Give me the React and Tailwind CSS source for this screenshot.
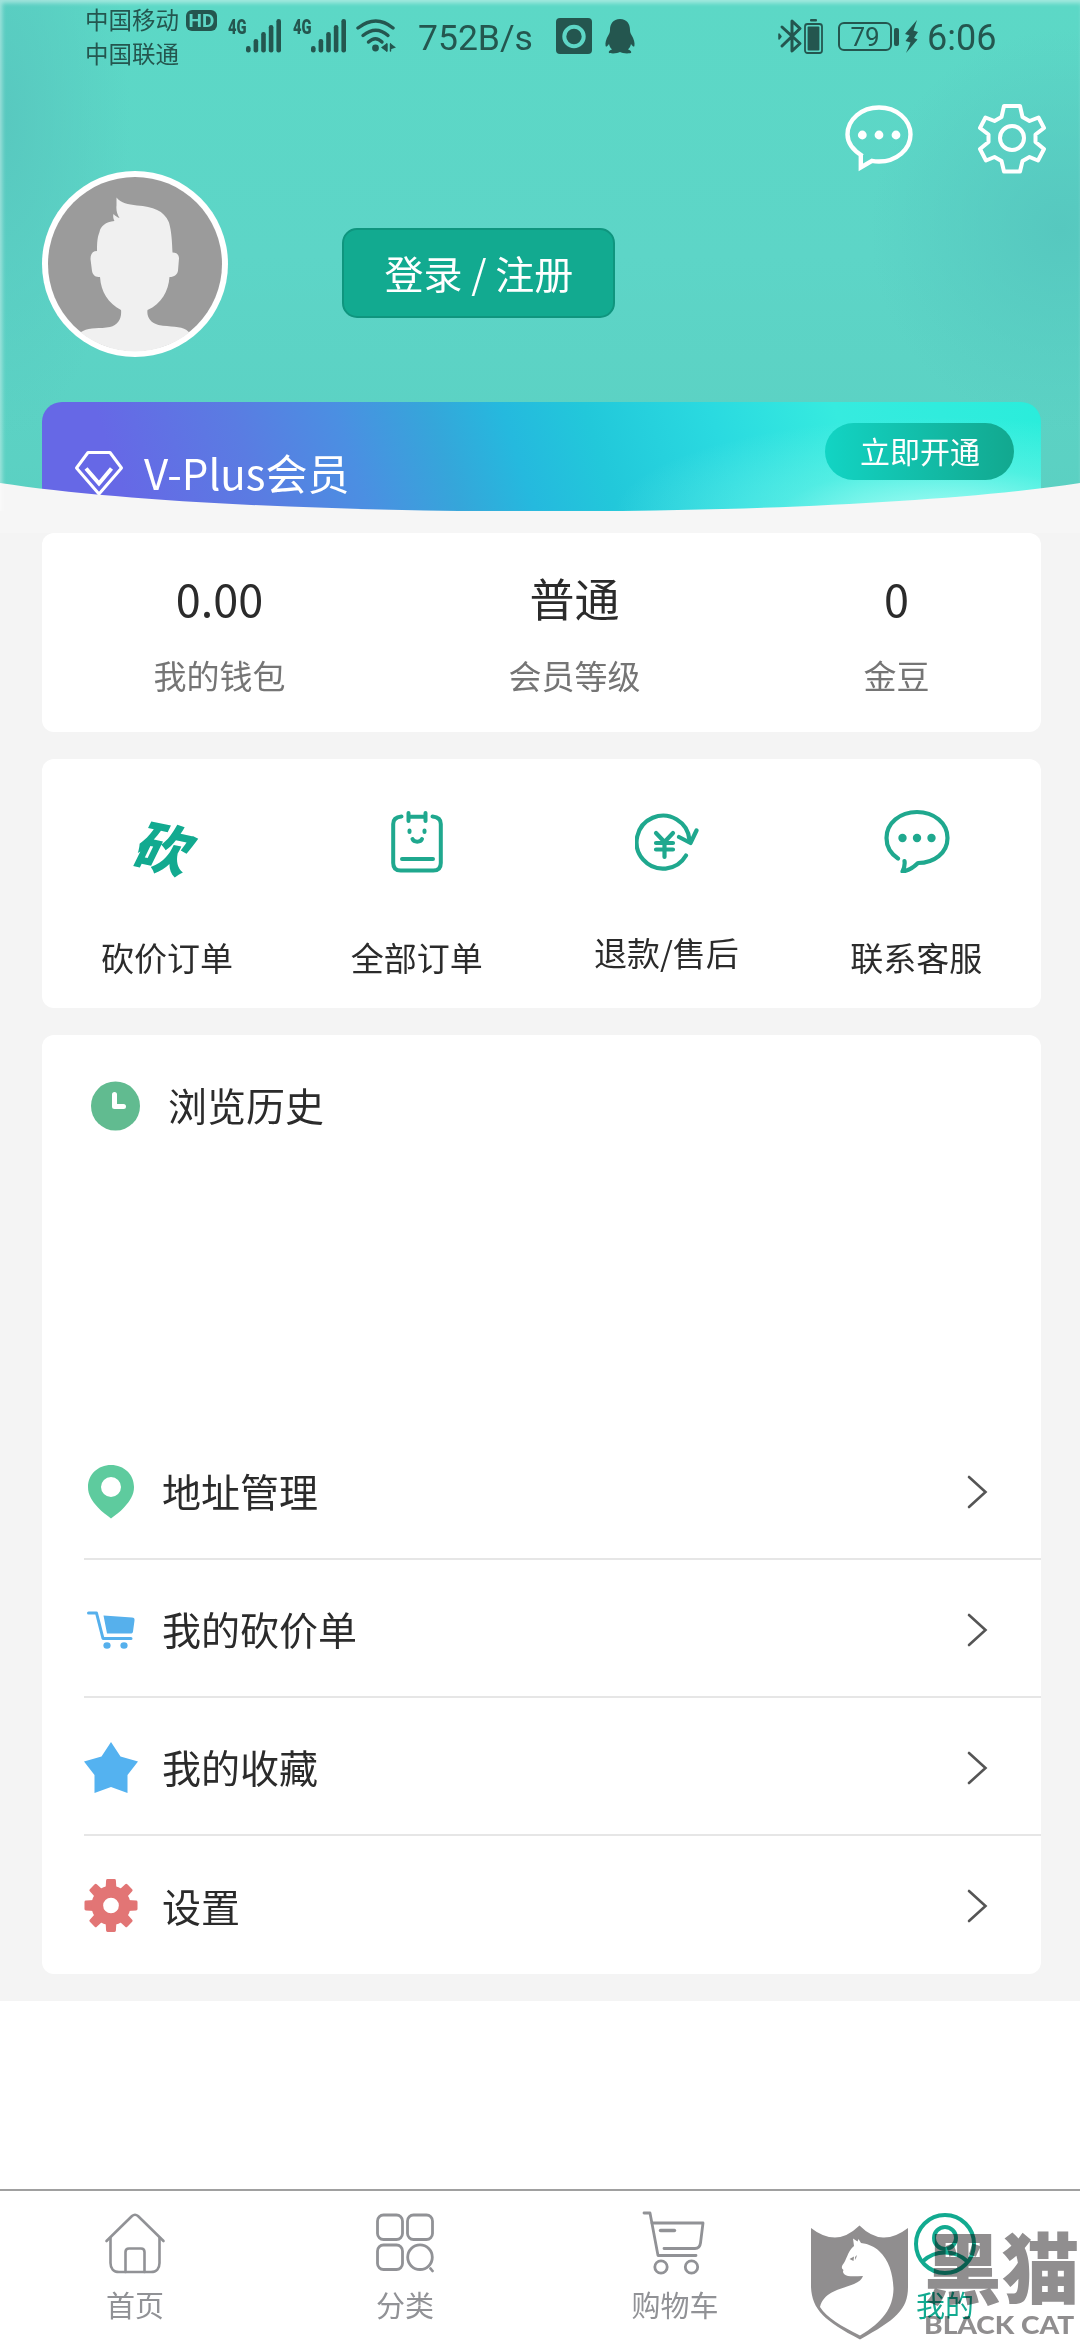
import React from "react";

const INK = "#24564f";

function Signal() {
  return (
    <svg className="block h-[34px] w-[36px]" viewBox="0 0 36 34" fill={INK}>
      <rect x="0" y="27" width="4.6" height="6.5" rx="2.2" />
      <rect x="7.6" y="20" width="4.6" height="13.5" rx="2.2" />
      <rect x="15.2" y="13" width="4.6" height="20.5" rx="2.2" />
      <rect x="22.8" y="6" width="4.6" height="27.5" rx="2.2" />
      <rect x="30.4" y="0" width="4.6" height="33.5" rx="2.2" />
    </svg>
  );
}

function FourG() {
  return (
    <div className="flex h-[16px] w-[18px] items-center">
      <span className="block origin-left scale-x-[0.7] font-[Roboto] text-[21px] leading-[16px] font-black">4G</span>
    </div>
  );
}

function StatusBar() {
  return (
    <div className="flex h-[72px] items-start pl-[85px] text-[#24564f]">
      <div className="flex w-[96px] flex-col pt-[7px] text-[23.5px] leading-[24px] whitespace-nowrap">
        <span>中国移动</span>
        <span className="mt-[10px]">中国联通</span>
      </div>
      <div className="mt-[10px] ml-[5px] flex h-[21px] w-[31px] items-center justify-center rounded-[6px] bg-[#24564f] font-[Roboto] text-[19px] leading-none font-bold text-[#5ed6c6]">
        HD
      </div>
      <div className="mt-[19px] ml-[11px]"><FourG /></div>
      <div className="mt-[19px]"><Signal /></div>
      <div className="mt-[19px] ml-[11px]"><FourG /></div>
      <div className="mt-[19px]"><Signal /></div>
      <svg className="mt-[18px] ml-[9px] block h-[36px] w-[41px]" viewBox="0 0 41 36" fill="none" stroke={INK} strokeWidth="3.4" strokeLinecap="round">
        <path d="M2 10 Q20 -4 37 10" />
        <path d="M7 17.500 Q20 7 32 17.500" />
        <path d="M12.500 24 Q19.500 17.500 26 24" />
        <circle cx="19.500" cy="30" r="3.400" fill={INK} stroke="none" />
        <path d="M31 25v9l-6-4.500zM34 25l6 4.500-6 2z" fill={INK} stroke="none" />
        <path d="M31 26v7M34.500 26v7" strokeWidth="1.400" />
      </svg>
      <div className="mt-[17px] ml-[21px] w-[118px] font-[Roboto] text-[35.5px] leading-[42px] whitespace-nowrap">752B/s</div>
      <svg className="mt-[18px] ml-[20px] block h-[36px] w-[36px]" viewBox="0 0 36 36">
        <rect width="36" height="36" rx="4" fill={INK} />
        <circle cx="18" cy="18.500" r="9.700" fill="none" stroke="#5ed6c6" strokeWidth="4" />
      </svg>
      <svg className="mt-[18px] ml-[13px] block h-[36px] w-[30px]" viewBox="0 0 30 36" fill={INK}>
        <path d="M15 1C8 1 5 6 5 12c0 2-.4 3-1.500 5C1 21 0 25 .6 28c.6 1.500 2 0 3.400-2 .6 2.500 1.500 4 3 5.500-2 .6-3.500 1.500-3.200 3 .4 1.300 9 1.200 11.200-.5 2.200 1.700 10.800 1.800 11.200.5.300-1.500-1.200-2.400-3.200-3 1.500-1.500 2.400-3 3-5.500 1.400 2 2.800 3.500 3.400 2 .6-3-.4-7-2.900-11-1.100-2-1.500-3-1.500-5C25 6 22 1 15 1z" />
      </svg>
      <svg className="mt-[18px] ml-[143px] block h-[36px] w-[25px]" viewBox="0 0 25 36" fill="none" stroke={INK} strokeWidth="3" strokeLinejoin="round" strokeLinecap="round">
        <path d="M4 9 22 25.500 14 33V3l8 7.500L4 28" />
        <path d="M1 16v5l2-2.500z" fill={INK} strokeWidth="1.500" />
      </svg>
      <svg className="mt-[18px] ml-px block h-[37px] w-[19px]" viewBox="0 0 19 37">
        <rect x="6" y="1" width="7" height="2.500" rx="1" fill={INK} />
        <rect x="1" y="6" width="17" height="29" rx="2.500" fill="none" stroke={INK} strokeWidth="1.800" />
        <rect x="3.600" y="8.600" width="11.800" height="24" rx="1" fill={INK} />
      </svg>
      <div className="mt-[22px] ml-[15px] flex h-[29px] w-[54px] items-center justify-center rounded-[6px] border-2 border-[#24564f] font-[Roboto] text-[26px] leading-none">
        79
      </div>
      <div className="mt-[28px] ml-[2px] h-[18px] w-[5px] rounded-[2px] bg-[#24564f]" />
      <svg className="mt-[20px] ml-[6px] block h-[33px] w-[13px]" viewBox="0 0 13 33" fill={INK}>
        <path d="M12 0 0 14l4.500 1.500L.5 21l5 1.500L1 33 12.500 19.500 9 18l4-6-4.500-1.500z" />
      </svg>
      <div className="mt-[17px] ml-[9px] font-[Roboto] text-[36px] leading-[42px] whitespace-nowrap">6:06</div>
    </div>
  );
}

function Avatar() {
  return (
    <svg className="block h-[186px] w-[186px]" viewBox="0 0 186 186">
      <defs>
        <clipPath id="face"><circle cx="93" cy="93" r="87.500" /></clipPath>
      </defs>
      <circle cx="93" cy="93" r="93" fill="#fff" />
      <circle cx="93" cy="93" r="87" fill="#9b9b9b" />
      <path
        clipPath="url(#face)"
        fill="#f0f0f0"
        d="M74.500 26.500C79 32 86 33.500 95 34.500c16 1 27 5 32 17 2.500 9 3 18 3.500 30 4 0 6.500 2 6.500 6l-1 12c-.5 4-3.500 6.500-8.500 6.500-1 14-8 27-22 33-1 7 3 13 11 15 12 2 22 1 28 5 4 3 7 8 7 12v20H33v-20c1-5 4-9 8-11 7-4 17-2 27-4 8-2 12-9 11-17-13-7-20-18-21-33-4 0-7-1-8-6l-1.500-12c0-5 2-8 6.500-8 0-9 .5-14 2.500-19 1-6 6-10 15-11-1.500-3-1.500-5-1-7 2 2 4 3.500 6 4-2.500-4-3.500-8-3-12.500z"
      />
    </svg>
  );
}

function Header() {
  return (
    <header className="relative h-[511px] overflow-hidden bg-[radial-gradient(ellipse_190px_200px_at_1060px_230px,#56c8bf_0%,transparent_100%),radial-gradient(ellipse_130px_320px_at_0px_120px,#58c8bf_0%,transparent_100%),linear-gradient(180deg,#5cd8c6_0%,#5dd5c7_50%,#5bd0c2_100%)]">
      <StatusBar />
      <div className="flex h-[99px] justify-end pt-[31px] pr-[34px]">
        <svg className="block h-[72px] w-[70px]" viewBox="0 0 70 72" fill="none" stroke="#fff" strokeWidth="4.400">
          <path d="M17.500 53C7 46.500 2.500 39.500 2.500 31.500c0-15 14-27 31.500-27s31.500 12 31.500 27-14 27-31.500 27c-2.500 0-5-.2-7-.6L15.800 64.500V52" />
          <g fill="#fff" stroke="none"><circle cx="17.300" cy="32" r="4.400" /><circle cx="34" cy="32" r="4.400" /><circle cx="51" cy="32" r="4.400" /></g>
        </svg>
        <svg className="ml-[63px] block h-[72px] w-[68px]" viewBox="0 0 68 72" fill="none" stroke="#fff" strokeWidth="4" strokeLinejoin="round">
          <path d="M26 3h16l2.500 11 7 4 9-3.500L66 25l-8.500 6.500v7.500L66 46l-6 11.500-8.500-3.500-7 4L42 68.500H26L23.500 58l-7-4-8.500 3.500L2 46l8.500-7v-7.500L2 25l5.500-10.500 9 3.500 7-4z" />
          <circle cx="34" cy="35" r="12" />
        </svg>
      </div>
      <div className="flex h-[231px] px-[42px]">
        <Avatar />
        <button className="mt-[57px] ml-[114px] flex h-[90px] w-[273px] items-center justify-center rounded-[15px] border-2 border-[#0f957e] bg-[#12aa90] pb-[2px] pl-px text-[39px] leading-none text-white">
          登录 / 注册
        </button>
      </div>
      <div className="mr-[39px] ml-[42px] flex h-[131px] justify-between rounded-t-[20px] bg-[radial-gradient(ellipse_330px_100px_at_900px_115px,rgba(190,255,248,0.85)_0%,rgba(120,245,232,0.45)_50%,transparent_100%),linear-gradient(72deg,#6668e6_0%,#6668e6_9%,#5a7ce2_22%,#4b8fe2_32%,#35a6da_41%,#25b9de_48%,#22c8da_56%,#2adae0_68%,#36ebdf_80%,#2aeddb_100%)] pr-[27px] pl-[32px]">
        <div className="flex items-start">
          <svg className="mt-[48px] block h-[47px] w-[50px]" viewBox="0 0 50 47" fill="none" stroke="#fff" strokeWidth="3" strokeLinejoin="round">
            <path d="M14 2.500h22L47.500 18 25 44 2.500 18z" />
            <path d="M12 18.500 25 33.500l12.500-15" strokeWidth="4" strokeLinejoin="miter" />
          </svg>
          <span className="mt-[49px] ml-[20px] text-[42px] leading-[42px] text-white">V-Plus会员</span>
        </div>
        <button className="mt-[21px] flex h-[57px] w-[189px] items-center justify-center rounded-full bg-linear-to-r from-[#12d4c4] to-[#12a88f] pb-[3px] pl-px text-[30px] leading-none text-white">
          立即开通
        </button>
      </div>
      <svg className="absolute bottom-0 left-0 block h-[29px] w-[1080px]" viewBox="0 0 1080 29">
        <path d="M0 1C250 39 830 39 1080 1V29H0z" fill="#f6f6f6" />
      </svg>
      <div className="absolute inset-0 shadow-[inset_2px_3px_4px_rgba(255,255,255,0.45)]" />
    </header>
  );
}

function Stat({ value, label }) {
  return (
    <div className="flex flex-col items-center">
      <span className="text-[45px] leading-[46px] text-[#2b2b2b]">{value}</span>
      <span className="mt-[37px] text-[33px] leading-[34px] text-[#757575]">{label}</span>
    </div>
  );
}

function Service({ icon, label, raised }) {
  return (
    <div className="flex flex-1 flex-col items-center">
      <div className="flex h-[181px] items-start justify-center">{icon}</div>
      <span className={raised ? "-mt-[5px] text-[33px] leading-[34px]" : "text-[33px] leading-[34px]"}>{label}</span>
    </div>
  );
}

const orderIcon = (
  <svg className="mt-[51px] block h-[64px] w-[52px]" viewBox="0 0 52 64" fill="none" stroke="#1fa88e" strokeWidth="4" strokeLinecap="round">
    <path d="M10.500 6.500C5 7 2.200 9.500 2.200 14v39c0 5 2.500 7.500 7.500 7.500h32.600c5 0 7.500-2.500 7.500-7.500V14c0-4.500-2.800-7-8.300-7.500" />
    <path d="M17.500 3v8M34.500 3v8M18 6.800h16M11 49h31" />
    <path d="M18.500 20.500v1.500M33.500 20.500v1.500M21.500 29c1.500 3.500 8 3.500 9.500 0" />
  </svg>
);

const refundIcon = (
  <svg className="mt-[52px] ml-[2px] block h-[62px] w-[64px]" viewBox="0 0 64 62" fill="none" stroke="#1fa88e" strokeWidth="4.200" strokeLinecap="round" strokeLinejoin="round">
    <path d="M51 44.500A26.500 26.500 0 1 1 54.500 29" />
    <path d="M44 26l11.500 6L61.500 19.500" />
    <path d="M21 22l8.500 9 8.500-9M21 32h17M21 38.500h17M29.500 32v14" />
  </svg>
);

const serviceIcon = (
  <svg className="mt-[50px] ml-px block h-[64px] w-[66px]" viewBox="0 0 66 64" fill="none" stroke="#1fa88e" strokeWidth="4.200" strokeLinecap="round" strokeLinejoin="round">
    <path d="M14 50C6.500 45 2.500 38 2.500 29.500 2.500 14.500 16 3.500 33 3.500s30.500 11 30.500 26S50 54.500 34 54.500c-4 4-9 7.500-15.500 8.500 2-4 2.500-7 2-10.500" transform="translate(0 -.5)" />
    <g fill="#1fa88e" stroke="none"><circle cx="18.500" cy="29" r="4.200" /><circle cx="33" cy="29" r="4.200" /><circle cx="47.500" cy="29" r="4.200" /></g>
  </svg>
);

const bargainIcon = (
  <span className="mt-[56px] block -skew-x-[14deg] rotate-[12deg] font-['AR_PL_UKai_CN','Noto_Sans_CJK_SC',cursive] text-[55px] leading-[62px] font-black text-[#12aa90]">砍</span>
);

function Row({ icon, label, last }) {
  return (
    <div className={last ? "flex h-[138px] items-center" : "flex h-[138px] items-center border-b-2 border-[#e6e6e6]"}>
      <div className={last ? "flex w-[54px] items-center justify-center pt-[1px]" : "flex w-[54px] items-center justify-center pt-[4px]"}>{icon}</div>
      <span className="ml-[24px] flex-1 text-[39px] leading-[40px] text-[#2b2b2b]">{label}</span>
      <svg className={last ? "mt-px mr-[53px] block h-[36px] w-[22px]" : "mt-[3px] mr-[53px] block h-[36px] w-[22px]"} viewBox="0 0 22 36" fill="none" stroke="#555" strokeWidth="2.600" strokeLinecap="round">
        <path d="M3 3l16.500 15L3 33" />
      </svg>
    </div>
  );
}

const pinIcon = (
  <svg className="block h-[54px] w-[46px]" viewBox="0 0 46 54">
    <path fillRule="evenodd" fill="#5ecb9e" d="M23 0C10 0 0 9.500 0 22c0 8 4 14 10 20.500C14 47 19 50 23 53.500c4-3.500 9-6.500 13-11C42 36 46 30 46 22 46 9.500 36 0 23 0zm0 12a10 10 0 1 1 0 20 10 10 0 0 1 0-20z" />
  </svg>
);

const bargainCartIcon = (
  <svg className="block h-[38px] w-[48px]" viewBox="0 0 48 38" fill="#56b0ec">
    <path d="M1.500 2h8l6.500 25.500h28" fill="none" stroke="#56b0ec" strokeWidth="3" strokeLinecap="round" strokeLinejoin="round" />
    <path d="M16.500 4.500 45 6.500c2 .2 2.800 1 2.500 3L46 20.500c-.2 1.500-1 2-2.500 2H20z" />
    <ellipse cx="20" cy="34.500" rx="3.600" ry="3.300" />
    <ellipse cx="37" cy="34.500" rx="3.600" ry="3.300" />
  </svg>
);

const starIcon = (
  <svg className="block h-[52px] w-[54px]" viewBox="0 0 54 52" fill="#54b2f0">
    <path d="M27 0l9.500 14.500L54 19.500 43.500 33v18L27 45 10.500 51V33L0 19.500l17.500-5z" />
  </svg>
);

const cogTeeth = [0, 45, 90, 135, 180, 225, 270, 315];

const cogIcon = (
  <svg className="block h-[55px] w-[55px]" viewBox="-27.5 -27.5 55 55" fill="#e27575">
    {cogTeeth.map((angle) => (
      <path key={angle} transform={`rotate(${angle})`} d="M-5-25.500Q-5-27-3.500-27h7Q5-27 5-25.500L5.500-17H-5.500z" />
    ))}
    <path fillRule="evenodd" d="M0-20a20 20 0 1 0 0 40 20 20 0 0 0 0-40zm0 12a8 8 0 1 1 0 16A8 8 0 0 1 0-8z" />
  </svg>
);

function Tab({ icon, label, active }) {
  return (
    <div className={active ? "flex flex-1 flex-col items-center pt-[20px] text-[#12aa90]" : "flex flex-1 flex-col items-center pt-[19px] text-[#919296]"}>
      <div className="flex h-[66px] items-center">{icon}</div>
      <span className={active ? "mt-[12px] text-[29px] leading-[30px]" : "mt-[13px] text-[29px] leading-[30px]"}>{label}</span>
    </div>
  );
}

const tabIconClass = "block h-[66px] w-[66px]";

const homeIcon = (
  <svg className={tabIconClass} viewBox="0 0 66 66" fill="none" stroke="currentColor" strokeWidth="2.600" strokeLinecap="round" strokeLinejoin="round">
    <path d="M4.500 31 30 6Q33 3.500 36 6L61.500 31" />
    <path d="M8.500 28v25c0 5.500 3 9 8.500 9h32c5.500 0 8.500-3.500 8.500-9V28" />
    <path d="M23.500 62V42q0-3.500 3.500-3.500h12q3.500 0 3.500 3.500v20" />
  </svg>
);

const gridIcon = (
  <svg className={tabIconClass} viewBox="0 0 66 66" fill="none" stroke="currentColor" strokeWidth="2.800" strokeLinecap="round">
    <rect x="5.500" y="5" width="25" height="24.500" rx="6" />
    <rect x="35.500" y="5" width="25" height="24.500" rx="6" />
    <rect x="5.500" y="35" width="25" height="24.500" rx="6" />
    <circle cx="48" cy="47.200" r="12.300" />
    <path d="M58.500 58.500l2 2.500" />
  </svg>
);

const cartIcon = (
  <svg className={tabIconClass} viewBox="0 0 66 66" fill="none" stroke="currentColor" strokeWidth="2.800" strokeLinecap="round" strokeLinejoin="round">
    <path d="M2 3h6l8 42.500h38" />
    <path d="M10 13h51l-2.500 20c-.5 4-2 5.500-5.500 5.500H22" />
    <path d="M18.500 20.500h14" strokeWidth="3.400" />
    <circle cx="19" cy="57" r="6.200" />
    <circle cx="49.500" cy="57" r="6.200" />
  </svg>
);

const meIcon = (
  <svg className={tabIconClass} viewBox="0 0 66 66" fill="none" stroke="currentColor" strokeWidth="4">
    <circle cx="33" cy="33" r="29" />
    <circle cx="33" cy="27" r="11" />
    <path d="M10.500 50.500Q20 41.500 33 41.500t22.500 9" />
  </svg>
);

function Watermark() {
  return (
    <div className="absolute right-0 bottom-0 flex h-[118px] w-[269px] mix-blend-multiply text-[#908e8f]">
      <svg className="mt-[2px] block h-[116px] w-[98px] shrink-0" viewBox="0 0 98 116">
        <path fill="#908e8f" d="M0 4q12 9.500 24 9.500T48.500 1.500Q60 13 72 13.500T97 4v59C97 86 84 96 49 115.500 14 97 1 86 0 63z" />
        <path fill="#fff" d="M42 14.500l4.500 3L47.500 15l2.500 4c8 1 14 4 18 8 10 9 14 23 14.500 38C82 84 72 98 49 111.500 30 102 16 94 9 83c4-16 22-18 34-23 5-2 8-5 9-8-5 0-10 .8-15 0-4-1-6-3-4.500-6-2-1.500-2-3-1-5C36 36 36 28 43 22z" />
        <path fill="#908e8f" d="M38.500 35l4.500-2.500-.5 4.500zM44 33l2-2-1.500 5z" />
      </svg>
      <div className="ml-[15px] flex w-[156px] flex-col">
        <span className="mt-[4px] block h-[78px] origin-left scale-x-[1.01] text-[77px] leading-[78px] font-black whitespace-nowrap">黑猫</span>
        <span className="mt-[7px] block origin-left scale-x-[1.17] font-[Lato] text-[24px] leading-[28px] font-black whitespace-nowrap">BLACK CAT</span>
      </div>
    </div>
  );
}

export default function App() {
  return (
    <div className="relative flex h-[2340px] w-[1080px] flex-col overflow-hidden bg-white font-['Noto_Sans_CJK_SC',sans-serif] text-[#2b2b2b]">
      <div className="h-[2001px] bg-[#f4f4f4]">
        <Header />
        <div className="h-[22px] bg-[#f6f6f6]" />
        <main className="mr-[39px] ml-[42px] flex flex-col gap-[27px]">
          <section className="flex h-[199px] justify-around rounded-[12px] bg-white pt-[42px]">
            <Stat value="0.00" label="我的钱包" />
            <Stat value="普通" label="会员等级" />
            <Stat value="0" label="金豆" />
          </section>
          <section className="flex h-[249px] rounded-[12px] bg-white">
            <Service icon={bargainIcon} label="砍价订单" />
            <Service icon={orderIcon} label="全部订单" />
            <Service icon={refundIcon} label="退款/售后" raised />
            <Service icon={serviceIcon} label="联系客服" />
          </section>
          <section className="flex h-[939px] flex-col rounded-[12px] bg-white pl-[42px]">
            <div className="flex h-[387px] items-start pt-[46px] pl-[7px]">
              <svg className="block h-[50px] w-[49px]" viewBox="0 0 49 50">
                <ellipse cx="24.500" cy="25" rx="24.500" ry="24.500" fill="#61bb90" />
                <path d="M23.500 13.500V25.500H32.500" fill="none" stroke="#fff" strokeWidth="5" strokeLinecap="round" strokeLinejoin="round" />
              </svg>
              <span className="mt-[3px] ml-[28px] text-[39px] leading-[40px]">浏览历史</span>
            </div>
            <Row icon={pinIcon} label="地址管理" />
            <Row icon={bargainCartIcon} label="我的砍价单" />
            <Row icon={starIcon} label="我的收藏" />
            <Row icon={cogIcon} label="设置" last />
          </section>
        </main>
      </div>
      <nav className="mt-[188px] flex h-[151px] border-t-2 border-[#a0a0a0] bg-white">
        <Tab icon={homeIcon} label="首页" />
        <Tab icon={gridIcon} label="分类" />
        <Tab icon={cartIcon} label="购物车" />
        <Tab icon={meIcon} label="我的" active />
      </nav>
      <Watermark />
    </div>
  );
}
